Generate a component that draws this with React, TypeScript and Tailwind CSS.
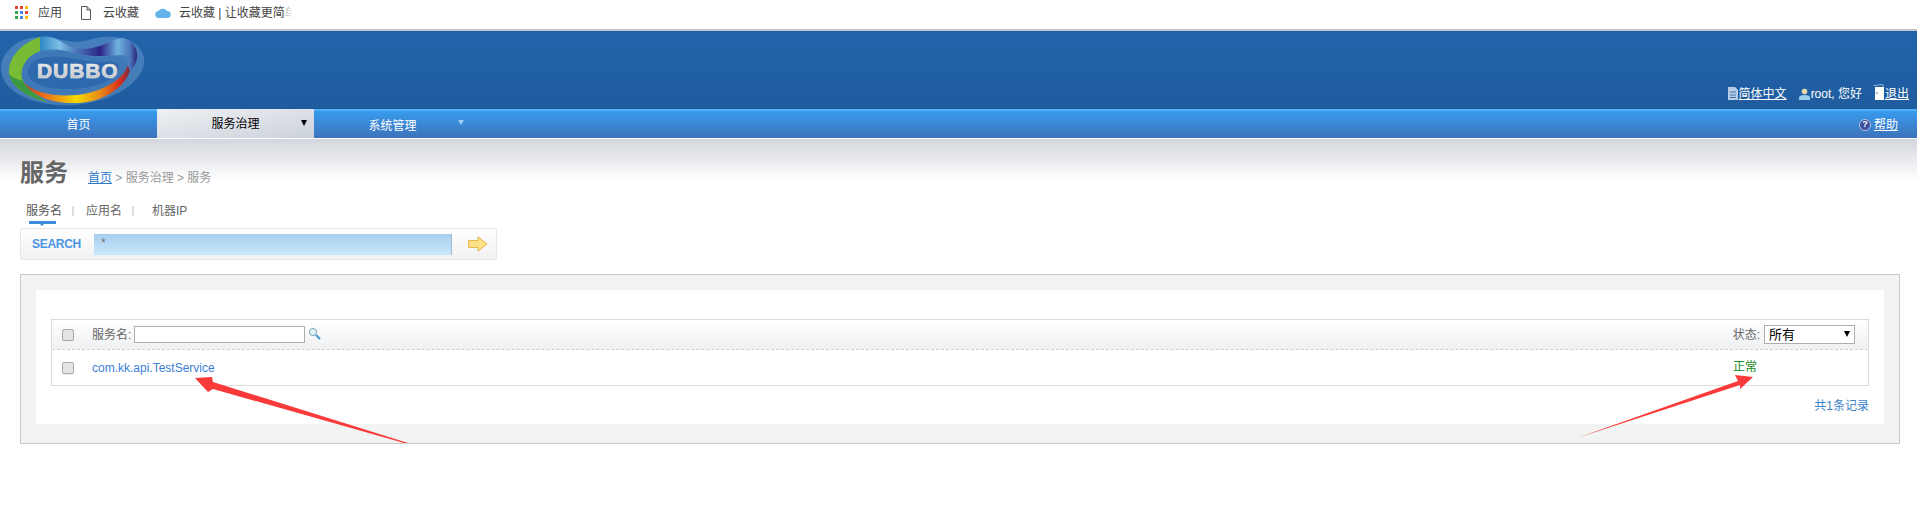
const font = '[font-family:"Liberation_Sans","Noto_Sans_CJK_SC",sans-serif]'

function AppsIcon() {
  const colors = ['#ea4335', '#ea4335', '#fbbc05', '#34a853', '#4285f4', '#ea4335', '#34a853', '#4285f4', '#fbbc05']
  return (
    <div className="grid grid-cols-3 gap-[2px] w-[13px]">
      {colors.map((c, i) => (
        <div key={i} className="w-[3px] h-[3px]" style={{ backgroundColor: c }} />
      ))}
    </div>
  )
}

function Logo() {
  return (
    <svg width="146" height="78" viewBox="0 0 146 78" className="block">
      <defs>
        <linearGradient id="rim" x1="0" y1="0" x2="1" y2="0">
          <stop offset="0" stopColor="#b5391f" />
          <stop offset="0.2" stopColor="#e8701a" />
          <stop offset="0.5" stopColor="#f7d900" />
          <stop offset="0.72" stopColor="#e8891a" />
          <stop offset="0.9" stopColor="#d8321c" />
          <stop offset="1" stopColor="#7a2a40" />
        </linearGradient>
        <linearGradient id="top" x1="0" y1="0" x2="1" y2="0">
          <stop offset="0" stopColor="#2f86c4" />
          <stop offset="0.2" stopColor="#7cc0e6" />
          <stop offset="0.38" stopColor="#4a74b8" />
          <stop offset="0.62" stopColor="#2c2488" />
          <stop offset="0.8" stopColor="#6eb2e0" />
          <stop offset="0.93" stopColor="#4a74b8" />
          <stop offset="1" stopColor="#2a2478" />
        </linearGradient>
        <linearGradient id="word" x1="0" y1="0" x2="0" y2="1">
          <stop offset="0" stopColor="#f4f4f4" />
          <stop offset="1" stopColor="#b9bcc0" />
        </linearGradient>
      </defs>
      <path d="M1 35C3 18 22 5 42 6C62 7 72 14 88 9C112 2 140 6 144 27C147 50 112 72 72 74C36 76 -1 62 1 35Z" fill="#7ea9d6" fillOpacity="0.4" />
      <path d="M21 40C22 24 42 18 62 20C78 22 90 28 106 26C120 24 128 28 127 36C124 52 98 62 68 63C42 64 20 56 21 40Z" fill="#3f78b6" />
      <path d="M28 40C29 28 46 24 64 26C80 28 92 32 106 31C116 30 120 33 119 38C116 50 94 58 68 58C44 58 27 52 28 40Z" fill="#2e69ae" />
      <path d="M40 6C22 12 8 26 9 42C10 54 26 66 47 71C36 64 27 58 23 50C19 40 24 26 40 20Z" fill="#78bc35" />
      <path d="M9 42C10 54 26 66 47 71C36 64 27 58 23 50C16 48 11 46 9 42Z" fill="#3b9a3f" />
      <path d="M23 50C32 62 56 66 77 64C96 62 122 52 128 34L130 40C124 58 100 72 77 72C54 73 32 66 23 50Z" fill="url(#rim)" />
      <path d="M40 6C52 4 60 10 67 14C78 20 90 18 100 15C110 11 116 7 123 7C133 9 138 18 137 27C136 33 133 37 130 40L128 34C130 28 128 24 122 24C114 24 108 25 100 25C88 26 78 22 67 20C58 18 48 18 40 20Z" fill="url(#top)" />
      <text x="37" y="47" fill="url(#word)" fontFamily="Liberation Sans" fontWeight="700" fontSize="21" letterSpacing="0.9" stroke="#e2e2e2" strokeWidth="0.6">DUBBO</text>
    </svg>
  )
}

function Arrow({ points }: { points: string }) {
  return <polygon points={points} fill="#f93a3a" />
}

function Check() {
  return <div className="w-[12px] h-[12px] rounded-[2px] border border-[#a9a9a9] bg-[#e4e4e4] shadow-[0_1px_0_#eee]" />
}

export default function App() {
  return (
    <div className={`relative w-[1917px] h-[518px] overflow-hidden bg-white text-[12px] leading-none text-[#555] ${font}`}>
      {/* bookmarks bar */}
      <div className="h-[31px] border-b-2 border-[#c4c6c8] flex items-center pl-[15px] pb-[4px] text-[#444]">
        <AppsIcon />
        <span className="ml-[10px]">应用</span>
        <svg width="10" height="14" viewBox="0 0 10 14" className="ml-[19px]" fill="none" stroke="#555">
          <path d="M.5.5H6L9.5 4V13.5H.5ZM6 .5V4H9.5" />
        </svg>
        <span className="ml-[12px]">云收藏</span>
        <svg width="16" height="10" viewBox="0 0 16 10" className="ml-[16px]">
          <path d="M4 10a3.5 3.5 0 0 1-.5-7A5 5 0 0 1 12 3a3.5 3.5 0 0 1 .5 7Z" fill="#63b4ea" />
        </svg>
        <span className="ml-[8px] whitespace-nowrap">
          云收藏 | 让收藏更简<span className="bg-gradient-to-r from-[#999] to-white to-60% bg-clip-text text-transparent">单</span>
        </span>
      </div>

      {/* blue header */}
      <div className="h-[78px] bg-gradient-to-b from-[#2163ab] to-[#1f5c9f] flex justify-between">
        <Logo />
        <div className="flex items-end pb-[9px] pr-[8px] text-white">
          <svg width="12" height="13" viewBox="0 0 12 13">
            <path d="M1 0H8L11 3V13H1Z" fill="#b8cde4" />
            <path d="M3 5H9M3 8H9M3 10.5H9" stroke="#3f76b4" />
          </svg>
          <span className="underline">简体中文</span>
          <svg width="11" height="12" viewBox="0 0 11 12" className="ml-[12px] mr-px">
            <circle cx="5.5" cy="3.5" r="2.8" fill="#e9d9a8" />
            <path d="M0 12V9.5C0 8 2 7 5.5 7S11 8 11 9.5V12Z" fill="#9bd0ee" />
          </svg>
          <span>root, 您好</span>
          <svg width="12" height="17" viewBox="0 0 12 17" className="ml-[11px] -mb-[1px]">
            <path d="M.5 1.5 10 .5V3" stroke="#8fb4dc" fill="none" />
            <path d="M2 3H11V16H2Z" fill="#fff" />
            <circle cx="4" cy="9" r=".8" fill="#2163ab" />
          </svg>
          <span className="underline">退出</span>
        </div>
      </div>

      {/* nav */}
      <div className="h-[30px] border-t-2 border-[#52aef5] border-b border-b-white bg-gradient-to-b from-[#379bed] to-[#3c72bb] flex text-white">
        <div className="w-[157px] flex items-center justify-center">首页</div>
        <div className="w-[157px] -mt-[2px] pt-[1px] bg-gradient-to-br from-[#eef0f3] to-[#ccd2db] flex items-center justify-center relative text-black">
          服务治理
          <span className="absolute right-[7px] top-[11px] w-0 h-0 border-x-[3.5px] border-x-transparent border-t-[6px] border-t-black" />
        </div>
        <div className="w-[157px] flex items-center justify-center relative pt-[3px]">
          系统管理
          <span className="absolute right-[7px] top-[9px] w-0 h-0 border-x-[3px] border-x-transparent border-t-[5px] border-t-[#9fcdf3]" />
        </div>
        <div className="flex-1 flex items-center justify-end pr-[19px]">
          <div className="w-[12px] h-[12px] mr-[3px] rounded-full bg-[#3c4fa0] border border-[#b9c6e0] text-[9px] font-bold flex items-center justify-center">?</div>
          <span className="underline">帮助</span>
        </div>
      </div>

      {/* page head */}
      <div className="h-[42px] bg-gradient-to-b from-[#d3d6dd] to-white flex items-end pl-[20px]">
        <span className="text-[24px] font-bold text-[#666] mb-[-4px]">服务</span>
        <div className="ml-[20px] mb-[-3px] text-[#999]">
          <span className="text-[#2f79c9] underline">首页</span> &gt; 服务治理 &gt; 服务
        </div>
      </div>

      {/* search tabs */}
      <div className="flex pl-[26px] mt-[22px] h-[16px] items-center text-[#666]">
        <span className="text-[#555]">服务名</span>
        <span className="w-[2px] h-[10px] bg-[#ddd] ml-[10px]" />
        <span className="ml-[12px]">应用名</span>
        <span className="w-[2px] h-[10px] bg-[#ddd] ml-[10px]" />
        <span className="ml-[18px]">机器IP</span>
      </div>
      <div className="relative ml-[29px] mt-[2px] w-[27px] h-[3px] bg-[#3e8ddd]">
        <span className="absolute left-[11px] top-[3px] w-0 h-0 border-x-[2px] border-x-transparent border-t-[2px] border-t-[#3e8ddd]" />
      </div>

      <div className="ml-[20px] mt-[4px] w-[477px] h-[32px] border border-[#e6e6e6] rounded-[2px] bg-gradient-to-b from-white to-[#f1f1f1] flex items-center">
        <span className="ml-[11px] w-[62px] text-[12px] font-bold tracking-[-0.3px] text-[#4a95e3]">SEARCH</span>
        <div className="w-[358px] h-[21px] bg-gradient-to-b from-[#a9cdef] to-[#c9eafc] border-r border-[#9fb8d2] pl-[7px] pt-[3px] text-[#777]">*</div>
        <svg width="20" height="16" viewBox="0 0 20 16" className="ml-[16px]">
          <path d="M.5 4.5H10V.8L19 8 10 15.2V11.5H.5Z" fill="#fde08a" stroke="#e5b54a" />
        </svg>
      </div>

      {/* result panel */}
      <div className="ml-[20px] mt-[14px] w-[1880px] h-[170px] border border-[#c9c9c9] bg-[#f2f4f3] p-[15px]">
        <div className="h-[134px] bg-white pt-[29px] px-[15px]">
          <div className="border border-[#dcdcdc]">
            <div className="h-[30px] flex items-center bg-gradient-to-b from-white to-[#eef0f2] border-b border-dashed border-[#cfcfcf] text-[#666]">
              <div className="ml-[10px]"><Check /></div>
              <span className="ml-[18px]">服务名:</span>
              <div className="ml-[3px] w-[171px] h-[17px] border border-[#adadad] bg-white" />
              <svg width="13" height="13" viewBox="0 0 13 13" className="ml-[3px] -mt-[3px]">
                <circle cx="5" cy="5" r="3.6" fill="#dff1f7" stroke="#7fa9b8" />
                <path d="M8 8 12 12" stroke="#3f97d6" strokeWidth="2" />
              </svg>
              <div className="ml-auto flex items-center pr-[13px]">
                <span>状态:</span>
                <div className="ml-[4px] w-[91px] h-[19px] border border-[#adadad] bg-white text-[13px] text-black pl-[4px] flex items-center justify-between pr-[4px]">
                  所有
                  <span className="w-0 h-0 border-x-[3.5px] border-x-transparent border-t-[6px] border-t-black mb-[2px]" />
                </div>
              </div>
            </div>
            <div className="h-[35px] flex items-center">
              <div className="ml-[10px]"><Check /></div>
              <span className="ml-[18px] text-[#3a7fd5]">com.kk.api.TestService</span>
              <span className="ml-auto mr-[111px] text-[#1a8a1a] -mt-[2px]">正常</span>
            </div>
          </div>
          <div className="mt-[14px] text-right text-[#3a83c9]">共1条记录</div>
        </div>
      </div>

      {/* annotation arrows */}
      <svg width="1917" height="518" className="absolute inset-0 pointer-events-none">
        <Arrow points="195,378 212,377 213,382 408,443 404,443 213,389 208,392" />
        <Arrow points="1753,377 1735,375 1738,381 1577,438 1740,385 1740,389" />
      </svg>
    </div>
  )
}
